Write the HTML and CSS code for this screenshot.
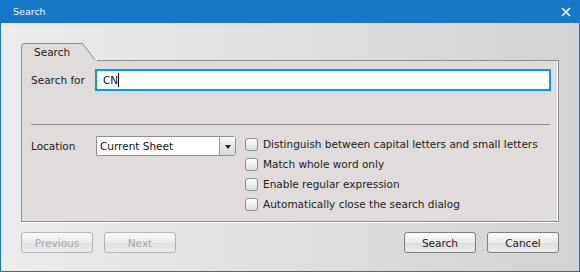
FILE: index.html
```html
<!DOCTYPE html>
<html lang="en">
  <head>
    <meta charset="UTF-8" />
    <link rel="stylesheet" href="styles.css">
    <title>Search</title>
  </head>
  <body>
    <div class="window">
      <div class="titlebar">
        <span>Search</span>
        <svg class="close" width="10" height="10" viewBox="0 0 10 10">
          <path d="M1 1L9 9M9 1L1 9" stroke="#fff" stroke-width="1.6" />
        </svg>
      </div>
      <div class="content">
        <div class="tab">
          <svg width="76" height="18" viewBox="0 0 76 18">
            <path d="M0.5 18V3.5Q0.5 0.5 3.5 0.5H61.5L74.5 17.5H76V18Z" fill="#e0dcdb" stroke="#8c8c8c" />
            <rect x="1" y="17" width="75" height="1" fill="#e0dcdb" />
          </svg>
          <span>Search</span>
        </div>
        <div class="panel">
          <div class="search-row">
            <label>Search for</label>
            <div class="text-input">CN<i class="caret"></i></div>
          </div>
          <div class="separator"></div>
          <div class="options">
            <div class="location">
              <label>Location</label>
              <div class="select">
                <span>Current Sheet</span>
                <span class="arrow"></span>
              </div>
            </div>
            <div class="checks">
              <div class="check"><span class="box"></span>Distinguish between capital letters and small letters</div>
              <div class="check"><span class="box"></span>Match whole word only</div>
              <div class="check"><span class="box"></span>Enable regular expression</div>
              <div class="check"><span class="box"></span>Automatically close the search dialog</div>
            </div>
          </div>
        </div>
        <div class="buttons">
          <button class="btn" disabled>Previous</button>
          <button class="btn" disabled>Next</button>
          <span class="spacer"></span>
          <button class="btn">Search</button>
          <button class="btn">Cancel</button>
        </div>
      </div>
    </div>
  </body>
</html>
```

FILE: styles.css
```css
* {
  box-sizing: border-box;
  margin: 0;
  padding: 0;
  font-family: 'DejaVu Sans', Verdana, sans-serif;
  font-size: 10.5px;
  --blue: #1777c8;
  --line: #8c8c8c;
  --panel: #e0dcdb;
}

body {
  width: 580px;
  height: 272px;
  overflow: hidden;
}

.window {
  width: 580px;
  height: 272px;
  display: flex;
  flex-direction: column;
  border: 1px solid var(--blue);
  border-top: none;
}

.titlebar {
  height: 23px;
  margin: 0 -1px;
  padding: 0 9px 0 13px;
  display: flex;
  align-items: center;
  justify-content: space-between;
  background-color: var(--blue);
  color: white;
}

.titlebar span {
  font-size: 9.5px;
  color: #f4f8fc;
}

.content {
  flex: 1;
  display: flex;
  flex-direction: column;
  padding: 20px 20px 0 20px;
  background: linear-gradient(90deg, #ececec, #d3d3d3);
}

.tab {
  display: grid;
  width: 76px;
  height: 18px;
  margin-bottom: -1px;
  position: relative;
  z-index: 1;
}

.tab svg,
.tab span {
  grid-area: 1 / 1;
}

.tab span {
  padding: 3px 0 0 13px;
  color: #222;
}

.panel {
  height: 162px;
  border: 1px solid var(--line);
  box-shadow: 0 1px 0 #fff, inset -1px 0 0 #fff;
  background-color: var(--panel);
  padding: 8px 7px 0 9px;
}

.search-row {
  display: flex;
  align-items: center;
}

.search-row label {
  width: 64px;
}

.search-row label,
.location label {
  color: #222;
}

.text-input {
  flex: 1;
  height: 22px;
  display: flex;
  align-items: center;
  padding-left: 6px;
  border: 2px solid #009fe3;
  background-color: white;
  color: #111;
}

.caret {
  width: 1px;
  height: 14px;
  background-color: #000;
}

.separator {
  height: 1px;
  margin: 33px 1px 0 0;
  background-color: var(--line);
}

.options {
  display: flex;
  padding-top: 9px;
}

.location {
  display: flex;
  align-items: center;
  height: 20px;
  margin-top: 2px;
  width: 214px;
}

.location label {
  width: 65px;
}

.select {
  width: 140px;
  height: 20px;
  display: flex;
  border: 1px solid #8f8f8f;
  border-radius: 0 3px 3px 0;
  background-color: white;
}

.select span:first-child {
  flex: 1;
  padding: 3px 0 0 3px;
  color: #111;
}

.arrow {
  width: 16px;
  border-left: 1px solid #9a9a9a;
  background: linear-gradient(#fafafa, #d8d8d8);
  display: flex;
  align-items: center;
  justify-content: center;
}

.arrow::after {
  content: '';
  border: 3.5px solid transparent;
  border-top: 4px solid #222;
  margin-top: 4px;
}

.checks {
  display: flex;
  flex-direction: column;
}

.check {
  display: flex;
  align-items: center;
  height: 20px;
  gap: 5px;
  color: #222;
}

.box {
  width: 13px;
  height: 13px;
  border: 1px solid #8e8e8e;
  border-radius: 3px;
  background: linear-gradient(#fdfdfd, #dedede);
}

.buttons {
  display: flex;
  gap: 11px;
  padding: 10px 0 0 0;
}

.spacer {
  flex: 1;
}

.btn {
  width: 72px;
  height: 21px;
  border: 1px solid #7d7d7d;
  border-radius: 3px;
  background: linear-gradient(#fefefe, #e9e9e9 50%, #dcdcdc 51%, #ececec);
  color: #222;
}

.btn:disabled {
  border-color: #b5b5b5;
  color: #a8a8a8;
  background: linear-gradient(#f8f8f8, #ebebeb 50%, #e0e0e0 51%, #ebebeb);
}
```
